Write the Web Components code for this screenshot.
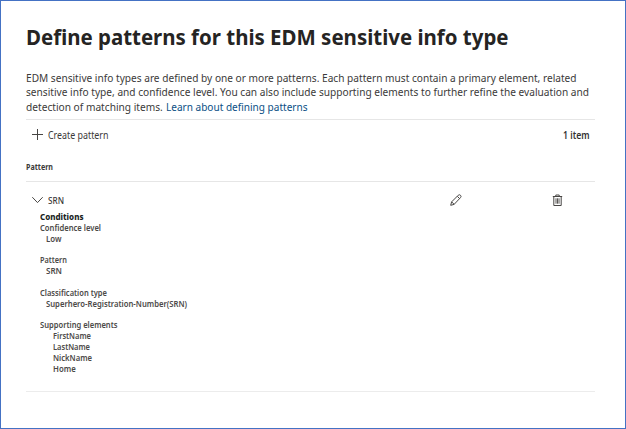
<!DOCTYPE html>
<html lang="en">
<head>
<meta charset="utf-8">
<title>Define patterns</title>
<style>
html, body { margin: 0; height: 100%; background: #fff; }
body { font-family: "Noto Sans", "Open Sans", sans-serif; color: #3b3a39; overflow: hidden; }
</style>
</head>
<body>
<pattern-page></pattern-page>
<script>
/* One line of text, condensed or widened to a given width. */
class TextRun extends HTMLElement {
  constructor() {
    super();
    this.attachShadow({ mode: 'open' }).innerHTML =
      `<style>
        :host { display: block; white-space: pre; }
        span { display: inline-block; vertical-align: top; transform-origin: 0 50%; }
      </style><span><slot></slot></span>`;
  }
  connectedCallback() {
    const w = parseFloat(this.getAttribute('w'));
    const span = this.shadowRoot.querySelector('span');
    const natural = span.getBoundingClientRect().width;
    if (!w || !natural) return;
    this.style.width = w + 'px';
    span.style.transform = `scaleX(${(w / natural).toFixed(4)})`;
  }
}

class UiIcon extends HTMLElement {
  connectedCallback() {
    const shapes = {
      plus: '<path d="M5.500 0v11M0 5.500h11"/>',
      chevron: '<path d="M.3 3.200 5.500 8.600l5.200-5.400"/>',
      pencil: '<path d="M.7 11.300l.9-3.400L8.200 1.300a1.500 1.500 0 0 1 2.300 2.300L4.100 10.400zM7.300 2.300l2.200 2.200M1.700 7.900l2.400 2.400"/>',
      trash: '<path d="M.8 2.500h9.400M3.800 2.300V1h3.400v1.300M1.800 2.500v9h7.400v-9"/><path d="M4 4.300v5.400M5.500 4.300v5.400M7 4.300v5.400" stroke-width=".9"/>'
    };
    this.attachShadow({ mode: 'open' }).innerHTML =
      `<style>:host{display:block;width:12px;height:12px}svg{display:block;overflow:visible;fill:none;stroke:#484644;stroke-width:1}</style>
       <svg width="12" height="12" viewBox="0 0 12 12">${shapes[this.getAttribute('name')]}</svg>`;
  }
}

class PageIntro extends HTMLElement {
  connectedCallback() {
    this.attachShadow({ mode: 'open' }).innerHTML = `
      <style>
        :host { display: block; }
        h1 { margin: 0 0 20.500px; font-size: 22px; line-height: 28px; font-weight: 700; color: #252423; }
        p { margin: 0; font-size: 11px; line-height: 14.600px; white-space: nowrap; }
        a { color: #0b4f85; text-decoration: none; }
        .line { display: flex; }
      </style>
      <h1><text-run w="482.500">Define patterns for this EDM sensitive info type</text-run></h1>
      <p>
        <span class="line"><text-run w="550.500">EDM sensitive info types are defined by one or more patterns. Each pattern must contain a primary element, related</text-run></span>
        <span class="line"><text-run w="563">sensitive info type, and confidence level. You can also include supporting elements to further refine the evaluation and</text-run></span>
        <span class="line"><text-run w="139.500">detection of matching items. </text-run><a href="#"><text-run w="141.500">Learn about defining patterns</text-run></a></span>
      </p>`;
  }
}

class CommandBar extends HTMLElement {
  connectedCallback() {
    this.attachShadow({ mode: 'open' }).innerHTML = `
      <style>
        :host { display: flex; justify-content: space-between; align-items: center; box-sizing: border-box;
          height: 31px; padding: 0 5.500px 0 5.700px; border-top: 1px solid #e6e6e6; font-size: 10.100px; line-height: 14px; }
        .create { display: flex; align-items: center; gap: 4px; }
        .count { font-weight: 600; font-size: 10px; color: #323130; }
      </style>
      <div class="create"><ui-icon name="plus"></ui-icon><text-run w="60.500">Create pattern</text-run></div>
      <div class="count"><text-run w="26.500">1 item</text-run></div>`;
  }
}

class PatternDetails extends HTMLElement {
  connectedCallback() {
    const rows = [
      ['Conditions', 43.5, 'head'], ['Confidence level', 61], ['Low', 15.5, 'in'], null,
      ['Pattern', 27], ['SRN', 16, 'in'], null,
      ['Classification type', 67], ['Superhero-Registration-Number(SRN)', 141, 'in'], null,
      ['Supporting elements', 77.5], ['FirstName', 38, 'in2'], ['LastName', 37, 'in2'],
      ['NickName', 39, 'in2'], ['Home', 22.7, 'in2']
    ];
    this.attachShadow({ mode: 'open' }).innerHTML = `
      <style>
        :host { display: block; padding: 1px 0 0 13.700px; font-size: 8.300px; font-weight: 600; color: #4c4a48; }
        div { height: 10.830px; line-height: 10.830px; }
        .head { font-weight: 800; color: #201f1e; }
        .in { padding-left: 6.400px; }
        .in2 { padding-left: 13.400px; }
      </style>` +
      rows.map(r => r ? `<div class="${r[2] || ''}"><text-run w="${r[1]}">${r[0]}</text-run></div>` : '<div></div>').join('');
  }
}

class PatternList extends HTMLElement {
  connectedCallback() {
    this.attachShadow({ mode: 'open' }).innerHTML = `
      <style>
        :host { display: block; border-bottom: 1px solid #ececec; padding-bottom: 16.500px; }
        header { display: flex; align-items: center; box-sizing: border-box; height: 32px; padding-top: 3px; border-bottom: 1px solid #e6e6e6;
          font-size: 7.900px; line-height: 12px; font-weight: 700; color: #3b3a39; }
        .row { display: grid; grid-template-columns: 418.300px 102.200px 1fr; align-items: center; height: 22px;
          padding: 7px 0 0 5.700px; font-size: 8.700px; line-height: 14px; font-weight: 500; }
        .name { display: flex; align-items: center; gap: 4px; }
        .name text-run { padding-top: 2px; }
      </style>
      <header><text-run w="27">Pattern</text-run></header>
      <div class="row">
        <div class="name"><ui-icon name="chevron"></ui-icon><text-run w="16">SRN</text-run></div>
        <ui-icon name="pencil"></ui-icon>
        <ui-icon name="trash"></ui-icon>
      </div>
      <pattern-details></pattern-details>`;
  }
}

class PatternPage extends HTMLElement {
  connectedCallback() {
    this.attachShadow({ mode: 'open' }).innerHTML = `
      <style>
        :host { display: block; box-sizing: border-box; width: 626px; height: 429px;
          border: 1px solid #4472c4; padding: 21px 30px 0 25.300px; }
        command-bar { margin-top: 4.700px; }
      </style>
      <page-intro></page-intro>
      <command-bar></command-bar>
      <pattern-list></pattern-list>`;
  }
}

customElements.define('text-run', TextRun);
customElements.define('ui-icon', UiIcon);
customElements.define('page-intro', PageIntro);
customElements.define('command-bar', CommandBar);
customElements.define('pattern-details', PatternDetails);
customElements.define('pattern-list', PatternList);
customElements.define('pattern-page', PatternPage);
</script>
</body>
</html>
